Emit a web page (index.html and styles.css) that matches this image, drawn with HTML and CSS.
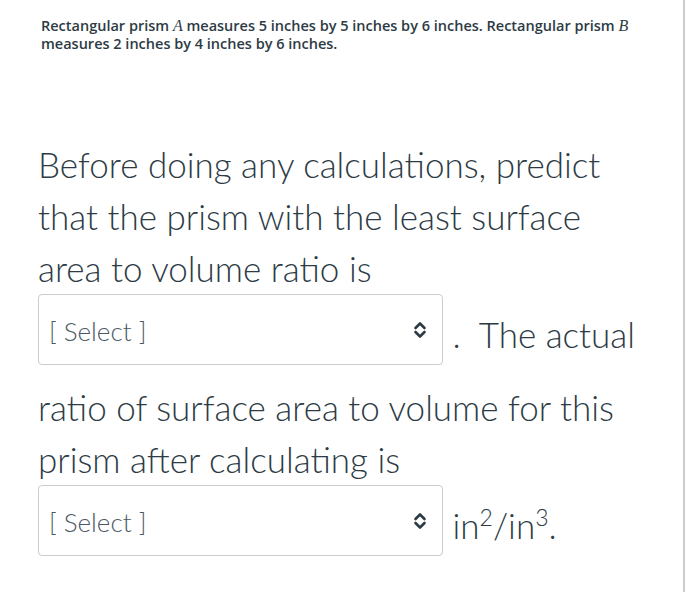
FILE: index.html
```html
<!DOCTYPE html>
<html lang="en">
<head>
<meta charset="utf-8">
<title>Surface area to volume ratio</title>
<link rel="stylesheet" href="styles.css">
</head>
<body>
<div class="page">
  <p class="intro">Rectangular prism <span class="math">A</span> measures 5 inches by 5 inches by 6 inches. Rectangular prism <span class="math">B</span> measures 2 inches by 4 inches by 6 inches.</p>
  <div class="question">Before doing any calculations, predict that the prism with the least surface area to volume ratio is <span class="select"><span class="select-text">[ Select ]</span><svg class="chev" width="14" height="18" viewBox="0 0 14 18"><polyline points="2.5,7 7,2.5 11.5,7" /><polyline points="2.5,11 7,15.5 11.5,11" /></svg></span> .<span class="gap"></span>The actual ratio of surface area to volume for this prism after calculating is <span class="select"><span class="select-text">[ Select ]</span><svg class="chev" width="14" height="18" viewBox="0 0 14 18"><polyline points="2.5,7 7,2.5 11.5,7" /><polyline points="2.5,11 7,15.5 11.5,11" /></svg></span> in<sup>2</sup>/in<sup>3</sup>.</div>
</div>
</body>
</html>
```

FILE: styles.css
```css
html, body {
  margin: 0;
  padding: 0;
  background: #ffffff;
}

.page {
  box-sizing: border-box;
  width: 685px;
  min-height: 592px;
  border-right: 2px solid #c7cdd1;
  padding: 17px 40px 0 38px;
}

.intro {
  margin: 0;
  padding-left: 3px;
  font-family: "Open Sans", "Liberation Sans", sans-serif;
  font-size: 14.5px;
  font-weight: 600;
  line-height: 18px;
  color: #2d3b45;
}

.math {
  font-family: "Liberation Serif", "DejaVu Serif", serif;
  font-style: italic;
  font-size: 16px;
  font-weight: 400;
}

.question {
  margin-top: 85px;
  font-family: Lato, "Liberation Sans", sans-serif;
  font-size: 35px;
  font-weight: 300;
  line-height: 52px;
  color: #2d3b45;
}

.select {
  box-sizing: border-box;
  display: inline-flex;
  justify-content: space-between;
  align-items: flex-start;
  width: 405px;
  height: 71px;
  margin: 0 0 16px 0;
  padding: 23px 15px 0 10px;
  border: 1.5px solid #c7cdd1;
  border-radius: 4px;
  background: #ffffff;
  vertical-align: 7px;
}

.select-text {
  font-size: 26px;
  line-height: 26px;
  color: #4a5863;
  font-weight: 300;
}

.chev {
  margin-top: 3px;
  fill: none;
  stroke: #2d3b45;
  stroke-width: 2.6;
  stroke-linecap: round;
  stroke-linejoin: round;
}

.gap {
  display: inline-block;
  width: 18px;
}

sup {
  font-size: 23px;
  line-height: 0;
  vertical-align: 13px;
}
```
